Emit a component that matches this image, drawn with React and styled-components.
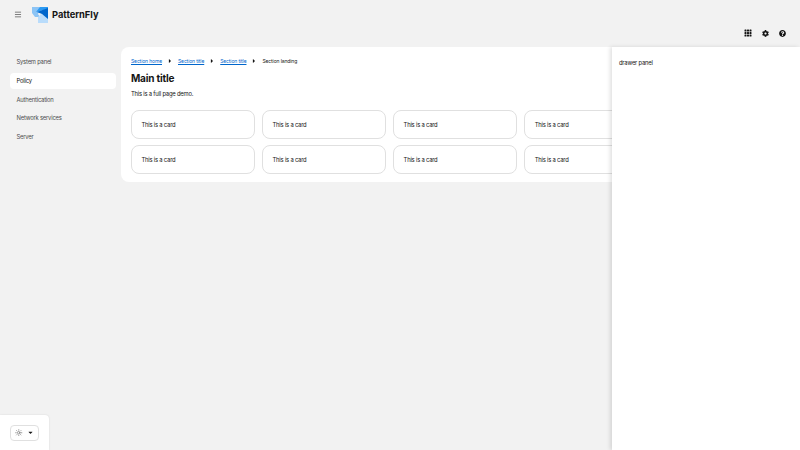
import styled, { createGlobalStyle } from 'styled-components'
import { Menu, Sun } from 'lucide-react'
import { FaCog, FaQuestionCircle, FaCaretDown, FaCaretRight } from 'react-icons/fa'
import { BsGrid3X3GapFill } from 'react-icons/bs'

const GlobalStyle = createGlobalStyle`
html, body {
    margin: 0;
    padding: 0;
    height: 100%;
    overflow: hidden;
}
body {
    font-family: "Inter", "Liberation Sans", sans-serif;
    font-size: 5.83px;
    letter-spacing: -0.2px;
    color: #151515;
    background: #f2f2f2;
}
`

const Page = styled.div`
position: relative;
width: 800px;
height: 450px;
background: #f2f2f2;
overflow: hidden;
display: flex;
flex-direction: column;
`

const Masthead = styled.header`
height: 47px;
flex: none;
display: flex;
justify-content: space-between;
padding: 7px 14px 0 14px;
box-sizing: border-box;
`

const Brand = styled.div`
display: flex;
align-items: flex-start;
`

const MenuButton = styled.div`
width: 8px;
height: 8px;
margin-top: 3px;
color: #444;
display: flex;
align-items: center;
justify-content: center;
`

const LogoMark = styled.svg`
width: 16px;
height: 16px;
margin-left: 10px;
`

const LogoText = styled.span`
font-size: 9.3px;
font-weight: 700;
line-height: 15px;
letter-spacing: 0;
margin-left: 4px;
`

const Tools = styled.div`
display: flex;
gap: 10px;
margin-top: 22px;
height: 8px;
color: #151515;
align-items: center;
`

const Body = styled.div`
flex: 1;
display: flex;
min-height: 0;
`

const Sidebar = styled.nav`
width: 121px;
flex: none;
padding: 7px 5px 0 10px;
box-sizing: border-box;
display: flex;
flex-direction: column;
gap: 2.75px;
`

const NavItem = styled.a`
height: 16px;
line-height: 16px;
padding: 0 6.5px;
border-radius: 4px;
color: ${(p) => (p.$active ? '#151515' : '#4d4d4d')};
background: ${(p) => (p.$active ? '#fff' : 'transparent')};
`

const Main = styled.main`
width: 679px;
height: 135px;
flex: none;
background: #fff;
border-radius: 8px 0 0 8px;
padding: 10px;
box-sizing: border-box;
`

const Breadcrumb = styled.div`
display: flex;
align-items: center;
height: 7px;
font-size: 5px;
letter-spacing: -0.12px;
`

const Crumb = styled.a`
color: #0066cc;
text-decoration: underline;
`

const CrumbCurrent = styled.span`
color: #151515;
`

const CrumbSep = styled.span`
display: flex;
width: 16px;
justify-content: center;
font-size: 6px;
color: #151515;
`

const Title = styled.h1`
font-size: 10px;
font-weight: 700;
line-height: 14px;
letter-spacing: -0.2px;
margin: 7px 0 0;
`

const Lead = styled.p`
line-height: 9px;
margin: 4px 0 0;
`

const CardGrid = styled.div`
display: grid;
grid-template-columns: repeat(4, 124.4px);
grid-auto-rows: 28.5px;
gap: 6.75px 6.67px;
margin-top: 12px;
`

const Card = styled.div`
border: 1px solid #e0e0e0;
border-radius: 8px;
background: #fff;
padding: 0 9.5px;
display: flex;
align-items: center;
box-sizing: border-box;
`

const Drawer = styled.aside`
position: absolute;
top: 47px;
right: 0;
bottom: 0;
width: 188px;
background: #fff;
box-shadow: -2px 0 4px rgba(3, 3, 3, 0.12);
padding: 11px 7px;
box-sizing: border-box;
line-height: 9px;
`

const ThemeDock = styled.div`
position: absolute;
left: 0;
bottom: 0;
width: 49px;
height: 35px;
background: #fff;
border-radius: 0 4px 0 0;
box-shadow: 0 0 2px rgba(3, 3, 3, 0.12);
display: flex;
align-items: center;
justify-content: center;
`

const ThemeToggle = styled.div`
width: 29px;
height: 16px;
border: 1px solid #e0e0e0;
border-radius: 4px;
box-sizing: border-box;
display: flex;
align-items: center;
justify-content: center;
gap: 4px;
color: #151515;
font-size: 7px;
`

const SunIcon = styled(Sun)`
width: 7.5px;
height: 7.5px;
color: #666;
`

const navItems = ['System panel', 'Policy', 'Authentication', 'Network services', 'Server']
const cards = Array.from({ length: 8 })

function App() {
    return (
        <>
            <GlobalStyle />
            <Page>
                <Masthead>
                    <Brand>
                        <MenuButton><Menu size={9} /></MenuButton>
                        <LogoMark viewBox="0 0 16 16">
                            <path d="M0 0H9L6 7 8 10H3L0 6z" fill="#8cc4f5" />
                            <path d="M6 16V10L9 7 16 9V16z" fill="#b9dcfb" />
                            <path d="M8 0H16V2L4 5z" fill="#2b9af3" />
                            <path d="M16 1V12L10 7 5 5z" fill="#0066cc" />
                        </LogoMark>
                        <LogoText>PatternFly</LogoText>
                    </Brand>
                    <Tools>
                        <BsGrid3X3GapFill size={8} />
                        <FaCog size={7} />
                        <FaQuestionCircle size={7} />
                    </Tools>
                </Masthead>
                <Body>
                    <Sidebar>
                        {navItems.map((item) => (
                            <NavItem key={item} $active={item === 'Policy'}>{item}</NavItem>
                        ))}
                    </Sidebar>
                    <Main>
                        <Breadcrumb>
                            <Crumb>Section home</Crumb>
                            <CrumbSep><FaCaretRight /></CrumbSep>
                            <Crumb>Section title</Crumb>
                            <CrumbSep><FaCaretRight /></CrumbSep>
                            <Crumb>Section title</Crumb>
                            <CrumbSep><FaCaretRight /></CrumbSep>
                            <CrumbCurrent>Section landing</CrumbCurrent>
                        </Breadcrumb>
                        <Title>Main title</Title>
                        <Lead>This is a full page demo.</Lead>
                        <CardGrid>
                            {cards.map((_, i) => <Card key={i}>This is a card</Card>)}
                        </CardGrid>
                    </Main>
                </Body>
                <Drawer>drawer panel</Drawer>
                <ThemeDock>
                    <ThemeToggle>
                        <SunIcon />
                        <FaCaretDown />
                    </ThemeToggle>
                </ThemeDock>
            </Page>
        </>
    )
}

export default App
